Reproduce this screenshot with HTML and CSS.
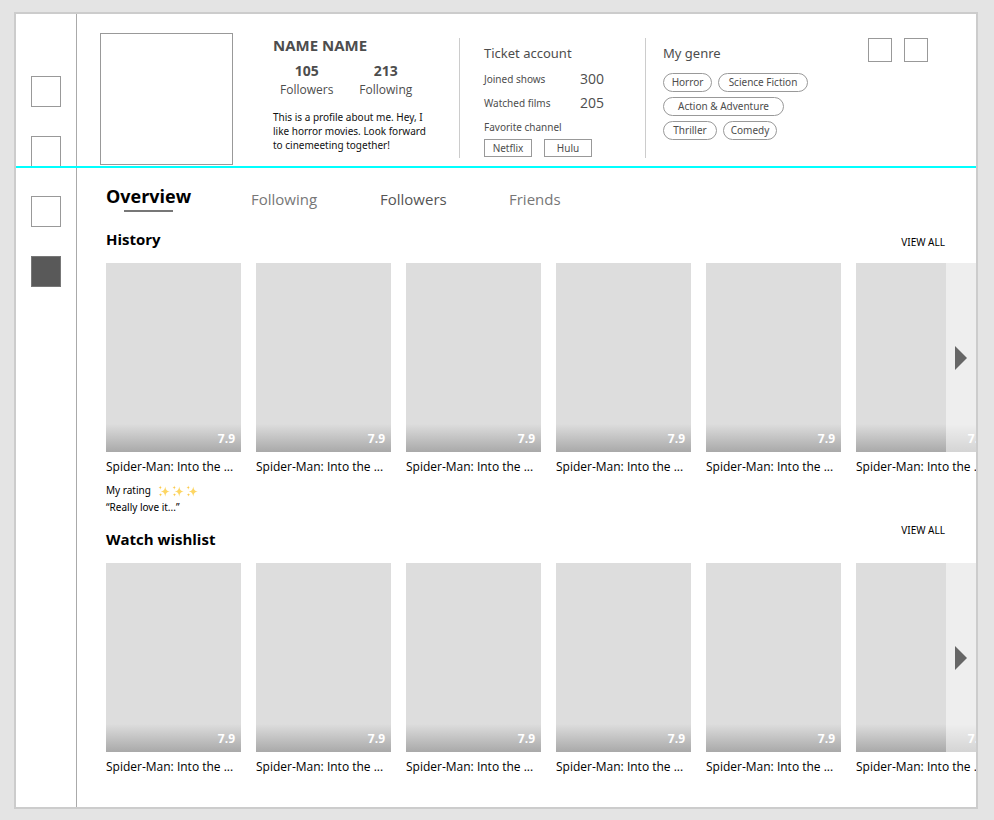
FILE: index.html
```html
<!DOCTYPE html>
<html lang="en">
<head>
<meta charset="utf-8">
<title>Profile</title>
<link rel="stylesheet" href="styles.css">
</head>
<body>
<svg class="defs" aria-hidden="true">
  <symbol id="sparkle" viewBox="0 0 24 24">
    <path fill="#fdd663" d="M14.5 3 C15.500 9.500 17 11.800 23.500 13 C17 14.200 15.500 16.500 14.500 23.500 C13.500 16.500 12 14.200 5.500 13 C12 11.800 13.500 9.500 14.500 3Z"/>
    <path fill="#fbc94a" d="M4.500 1 C5 4 5.500 4.700 8.500 5.200 C5.500 5.700 5 6.500 4.500 9.500 C4 6.500 3.500 5.700 .5 5.200 C3.500 4.700 4 4 4.500 1Z"/>
    <path fill="#fbc94a" d="M5 16 C5.400 18.500 6 19.100 8.500 19.500 C6 20 5.400 20.600 5 23 C4.600 20.600 4 20 1.500 19.500 C4 19.100 4.600 18.500 5 16Z"/>
  </symbol>
</svg>
<div class="frame">
  <nav class="rail" aria-label="Main">
    <a class="box rail-item" href="#home" aria-label="Home"></a>
    <a class="box rail-item" href="#search" aria-label="Search"></a>
    <a class="box rail-item" href="#shows" aria-label="Shows"></a>
    <a class="box rail-item current" href="#profile" aria-label="Profile"></a>
  </nav>
  <main class="main">
    <header class="profile">
      <div class="box avatar"></div>
      <section class="about">
        <h1>NAME NAME</h1>
        <dl class="counts">
          <div><dt>Followers</dt><dd>105</dd></div>
          <div><dt>Following</dt><dd>213</dd></div>
        </dl>
        <p>This is a profile about me. Hey, I like horror movies. Look forward to cinemeeting together!</p>
      </section>
      <section class="panel account">
        <h2>Ticket account</h2>
        <dl class="stats">
          <dt>Joined shows</dt><dd>300</dd>
          <dt>Watched films</dt><dd>205</dd>
        </dl>
        <h3>Favorite channel</h3>
        <div class="channels"><button>Netflix</button><button>Hulu</button></div>
      </section>
      <section class="panel genre">
        <h2>My genre</h2>
        <div class="chips"><button>Horror</button><button class="wide">Science Fiction</button></div>
        <div class="chips"><button class="wider">Action &amp; Adventure</button></div>
        <div class="chips"><button class="medium">Thriller</button><button class="medium">Comedy</button></div>
      </section>
      <div class="actions">
        <button class="box" aria-label="Edit"></button>
        <button class="box" aria-label="Settings"></button>
      </div>
    </header>
    <nav class="tabs" aria-label="Profile sections">
      <a class="active" href="#overview">Overview</a>
      <a href="#following">Following</a>
      <a class="strong" href="#followers">Followers</a>
      <a href="#friends">Friends</a>
    </nav>
    <section class="shelf history">
      <div class="shelf-head"><h2>History</h2><a href="#history">VIEW ALL</a></div>
      <div class="row">
        <article class="card">
          <div class="poster"><span>7.9</span></div>
          <h3>Spider-Man: Into the ...</h3>
          <p class="rating">My rating
            <span class="stars" role="img" aria-label="3 sparkles"><svg><use href="#sparkle"/></svg><svg><use href="#sparkle"/></svg><svg><use href="#sparkle"/></svg></span>
          </p>
          <p>“Really love it...”</p>
        </article>
        <article class="card"><div class="poster"><span>7.9</span></div><h3>Spider-Man: Into the ...</h3></article>
        <article class="card"><div class="poster"><span>7.9</span></div><h3>Spider-Man: Into the ...</h3></article>
        <article class="card"><div class="poster"><span>7.9</span></div><h3>Spider-Man: Into the ...</h3></article>
        <article class="card"><div class="poster"><span>7.9</span></div><h3>Spider-Man: Into the ...</h3></article>
        <article class="card"><div class="poster"><span>7.9</span></div><h3>Spider-Man: Into the ...</h3></article>
        <button class="next" aria-label="Next"><svg viewBox="0 0 12 24"><path d="M0 0L12 12L0 24Z"/></svg></button>
      </div>
    </section>
    <section class="shelf wishlist">
      <div class="shelf-head"><h2>Watch wishlist</h2><a href="#wishlist">VIEW ALL</a></div>
      <div class="row">
        <article class="card"><div class="poster"><span>7.9</span></div><h3>Spider-Man: Into the ...</h3></article>
        <article class="card"><div class="poster"><span>7.9</span></div><h3>Spider-Man: Into the ...</h3></article>
        <article class="card"><div class="poster"><span>7.9</span></div><h3>Spider-Man: Into the ...</h3></article>
        <article class="card"><div class="poster"><span>7.9</span></div><h3>Spider-Man: Into the ...</h3></article>
        <article class="card"><div class="poster"><span>7.9</span></div><h3>Spider-Man: Into the ...</h3></article>
        <article class="card"><div class="poster"><span>7.9</span></div><h3>Spider-Man: Into the ...</h3></article>
        <button class="next" aria-label="Next"><svg viewBox="0 0 12 24"><path d="M0 0L12 12L0 24Z"/></svg></button>
      </div>
    </section>
  </main>
</div>
</body>
</html>
```
FILE: styles.css
```css
* { box-sizing: border-box; margin: 0; padding: 0; }
body {
  padding: 12px 16px 12px 14px;
  background: #e4e4e4;
  color: #000;
  font: 10px/14px "Noto Sans", "Open Sans", sans-serif;
}
h1, h2, h3, dd, .counts, .tabs, .poster { font-family: "Open Sans", "Noto Sans", sans-serif; }
a { color: inherit; text-decoration: none; }
button { font: inherit; color: inherit; background: none; border: 0; cursor: pointer; }
.defs { position: absolute; width: 0; height: 0; }

.frame {
  position: relative;
  display: flex;
  border: 2px solid #ccc;
  background: #fff;
}
.frame::after {
  content: "";
  position: absolute;
  top: 152px;
  left: 0;
  right: 0;
  height: 2px;
  background: #0ff;
}
.box { border: 1px solid #999; }

.rail {
  flex: none;
  width: 61px;
  padding: 62px 0 0 15px;
  border-right: 1px solid #aaa;
  display: flex;
  flex-direction: column;
  gap: 29px;
}
.rail-item { width: 30px; height: 31px; }
.rail-item.current { background: #595959; border-color: #777; }

.main { flex: 1; min-width: 0; padding-bottom: 25px; }

.profile {
  display: flex;
  height: 154px;
  padding: 19px 48px 0 23px;
  color: #4d4d4d;
}
.avatar { flex: none; width: 133px; height: 132px; }
.about { flex: none; width: 186px; margin-left: 40px; padding-top: 2px; }
.about h1 { font-size: 15px; line-height: 20px; }
.counts { display: flex; gap: 26px; padding: 6px 0 0 7px; }
.counts div { display: flex; flex-direction: column-reverse; text-align: center; }
.counts dt { font-size: 12px; line-height: 18px; }
.counts dd { font-size: 14px; line-height: 20px; font-weight: 700; }
.about p { width: 162px; margin-top: 11px; color: #111; }

.panel {
  flex: none;
  height: 120px;
  margin-top: 5px;
  padding-top: 5px;
  border-left: 1px solid #ccc;
}
.panel h2 { font: 400 13px/20px "Noto Sans", "Open Sans", sans-serif; }
.account { width: 186px; padding-left: 24px; }
.stats { display: grid; grid-template-columns: 96px 1fr; margin-top: 4px; line-height: 24px; }
.stats dd { font-size: 14px; }
.account h3 { font: inherit; line-height: 24px; }
.channels { display: flex; gap: 12px; }
.channels button { width: 48px; height: 18px; border: 1px solid #999; line-height: 16px; }
.genre { padding-left: 17px; }
.genre h2 { margin-bottom: 10px; }
.chips { display: flex; gap: 6px; margin-bottom: 5px; }
.chips button { width: 49px; height: 19px; border: 1px solid #999; border-radius: 10px; line-height: 17px; }
.chips .medium { width: 54px; }
.chips .wide { width: 90px; }
.chips .wider { width: 121px; }
.actions { display: flex; gap: 12px; margin: 5px 0 0 auto; }
.actions button { width: 24px; height: 24px; }

.tabs {
  display: grid;
  grid-template-columns: 145px 129px 129px auto;
  align-items: center;
  padding: 15px 29px 0;
  color: #777;
  font-size: 15px;
  line-height: 26px;
}
.tabs a { justify-self: start; padding-top: 2px; }
.tabs .strong { color: #555; }
.tabs .active { position: relative; padding: 0 0 4px; color: #000; font-size: 18px; font-weight: 700; }
.tabs .active::after {
  content: "";
  position: absolute;
  left: 18px;
  right: 18px;
  bottom: 1px;
  height: 2px;
  background: #777;
}

.shelf-head { display: flex; justify-content: space-between; padding: 0 31px 0 29px; }
.shelf-head h2 { font-size: 15px; line-height: 20px; }
.history .shelf-head { margin-top: 16px; height: 34px; }
.history .shelf-head a { padding-top: 6px; }
.wishlist .shelf-head { margin-top: 7px; height: 40px; }
.wishlist .shelf-head h2 { padding-top: 6px; }
.row { position: relative; display: flex; gap: 15px; padding-left: 29px; overflow: hidden; }
.card { flex: none; width: 135px; }
.poster {
  display: flex;
  align-items: flex-end;
  justify-content: flex-end;
  height: 189px;
  padding: 0 6px 4px;
  background: linear-gradient(#a9a9a900, #a9a9a9) bottom / 100% 28px no-repeat #ddd;
  color: #fff;
  font-size: 12px;
  line-height: 18px;
  font-weight: 700;
}
.card h3 { padding: 6px 0; font-size: 12px; line-height: 18px; font-weight: 400; white-space: nowrap; }
.card p { line-height: 17px; }
.rating { display: flex; align-items: center; gap: 7px; }
.stars { display: flex; gap: 2px; }
.stars svg { width: 12px; height: 12px; }
.next {
  position: absolute;
  top: 0;
  right: 0;
  width: 30px;
  height: 189px;
  padding-left: 9px;
  background: #ffffff80;
}
.next svg { display: block; width: 12px; height: 24px; fill: #666; }
```
